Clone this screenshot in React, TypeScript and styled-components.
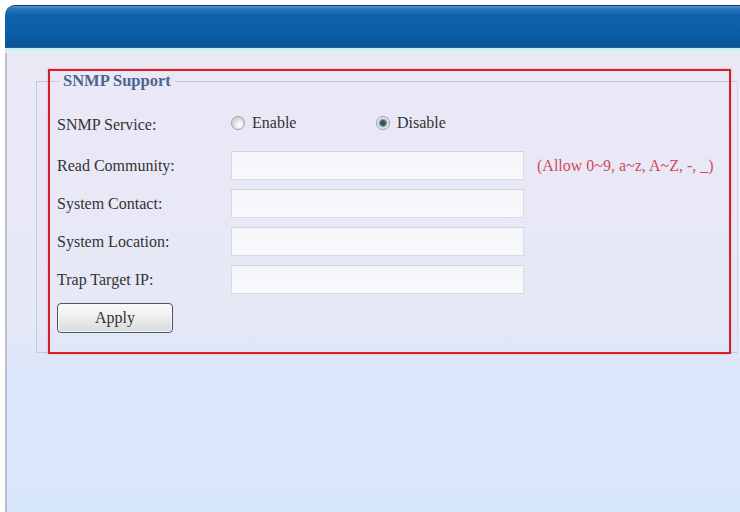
import styled, { createGlobalStyle } from "styled-components";

const fields = [
  { label: "Read Community:", hint: "(Allow 0~9, a~z, A~Z, -, _)" },
  { label: "System Contact:" },
  { label: "System Location:" },
  { label: "Trap Target IP:" },
];

const GlobalStyle = createGlobalStyle`
  html, body {
    margin: 0;
    padding: 0;
    background: #ffffff;
  }
  body {
    width: 740px;
    height: 512px;
    overflow: hidden;
    font-family: "Liberation Serif", "Times New Roman", serif;
  }
`;

const App = () => {
  return (
    <>
      <GlobalStyle />
      <Page>
        <Frame>
          <Header />
          <Strip />
          <Panel>
            <Fieldset>
              <Legend>SNMP Support</Legend>

              <Row>
                <Label>SNMP Service:</Label>
                <RadioGroup>
                  <RadioOption>
                    <Radio />
                    Enable
                  </RadioOption>
                  <RadioOption>
                    <Radio checked />
                    Disable
                  </RadioOption>
                </RadioGroup>
              </Row>

              <Fields>
                {fields.map((field) => (
                  <FieldRow key={field.label}>
                    <Label>{field.label}</Label>
                    <Input />
                    {field.hint && <Hint>{field.hint}</Hint>}
                  </FieldRow>
                ))}
              </Fields>

              <ApplyButton>Apply</ApplyButton>
            </Fieldset>

            <Highlight />
          </Panel>
        </Frame>
      </Page>
    </>
  );
};

const Page = styled.div`
  width: 740px;
  height: 512px;
  padding-top: 5px;
  padding-left: 5px;
  box-sizing: border-box;
  display: flex;
`;

const Frame = styled.div`
  flex: 1;
  display: flex;
  flex-direction: column;
`;

const Header = styled.div`
  height: 43px;
  border-radius: 10px 0 0 0;
  border-top: 1px solid #1c3c68;
  box-sizing: border-box;
  background: linear-gradient(
    #5a92d0 0,
    #2a76bc 3px,
    #0e64ac 9px,
    #0b5fa6 60%,
    #0a5698 100%
  );
  border-bottom: 1px solid #2a6090;
`;

const Strip = styled.div`
  height: 5px;
  background: linear-gradient(#c4ecf0, #e2f4f6);
`;

const Panel = styled.div`
  position: relative;
  flex: 1;
  border-left: 2px solid #b9c0cc;
  background: linear-gradient(
    #ebe8f6 0,
    #e6e8f6 260px,
    #dce6fa 320px,
    #d8e6fc 100%
  );
  padding: 20px 2px 0 29px;
`;

const Fieldset = styled.fieldset`
  margin: 0;
  padding: 21px 0 19px 20px;
  border: 1px solid #c6cad6;
  border-right-color: #d4d8e2;
  display: flex;
  flex-direction: column;
  align-items: flex-start;
  min-width: 0;
`;

const Legend = styled.legend`
  margin-left: 2px;
  padding: 0 4px;
  font-family: "Liberation Serif", "Times New Roman", serif;
  font-weight: bold;
  font-size: 16.5px;
  line-height: 16px;
  color: #4a6690;
`;

const Row = styled.div`
  display: flex;
  align-items: center;
  height: 30px;
`;

const Label = styled.div`
  width: 174px;
  flex-shrink: 0;
  font-size: 16px;
  color: #333333;
`;

const RadioGroup = styled.div`
  display: flex;
  align-items: center;
`;

const RadioOption = styled.label`
  width: 145px;
  display: flex;
  align-items: center;
  gap: 7px;
  font-size: 16px;
  color: #333333;
  margin-top: -4px;
`;

const Radio = styled.span<{ checked?: boolean }>`
  width: 14px;
  height: 14px;
  border-radius: 50%;
  box-sizing: border-box;
  border: 1px solid #9ca4ac;
  background: ${(p) =>
    p.checked
      ? "radial-gradient(circle, #2f4a4c 0, #3e5a5c 2.5px, #8a9ea4 3.5px, #e4eaee 5px)"
      : "radial-gradient(circle at 60% 65%, #ffffff 0, #eef0f2 3px, #d4d8dc 6px)"};
  box-shadow: 0 0 1px #c0c8cc;
`;

const Fields = styled.div`
  display: flex;
  flex-direction: column;
  gap: 9px;
  margin-top: 11px;
`;

const FieldRow = styled.div`
  display: flex;
  align-items: center;
`;

const Input = styled.input`
  width: 293px;
  height: 29px;
  box-sizing: border-box;
  border: 1px solid #d6dae2;
  border-top-color: #d0d4dc;
  background: linear-gradient(#f4f6fa, #f8f9fc);
  outline: none;
`;

const Hint = styled.span`
  margin-left: 13px;
  font-size: 16px;
  color: #d24a5a;
  white-space: nowrap;
`;

const ApplyButton = styled.button`
  margin-top: 9px;
  width: 116px;
  height: 30px;
  border: 1px solid #4c5660;
  border-radius: 4px;
  background: linear-gradient(#fbfbfb 0, #eeeeee 45%, #d9dadc 100%);
  box-shadow: inset 0 0 0 1px #f4f6f8;
  font-family: "Liberation Serif", "Times New Roman", serif;
  font-size: 16px;
  color: #333333;
  padding: 0;
`;

const Highlight = styled.div`
  position: absolute;
  left: 41px;
  top: 16px;
  width: 683px;
  height: 285px;
  box-sizing: border-box;
  border: 2px solid #d41e2c;
  box-shadow: 0 0 2px rgba(240, 100, 120, 0.6);
  pointer-events: none;
`;

export default App;
